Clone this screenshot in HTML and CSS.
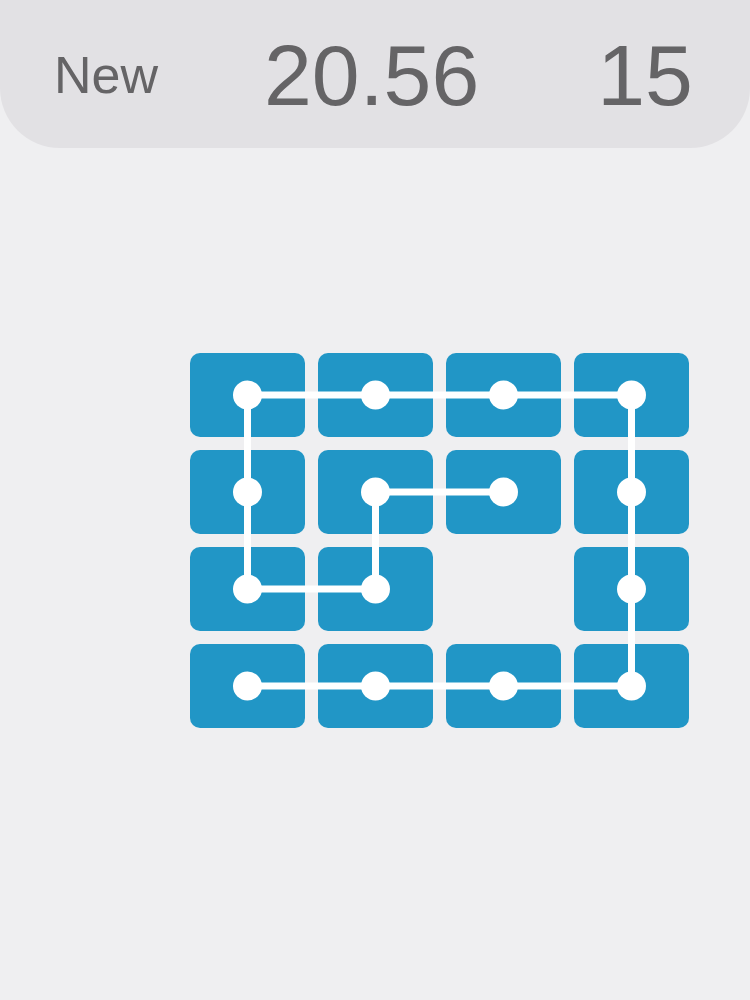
FILE: index.html
```html
<!DOCTYPE html>
<html>
<head>
<meta charset="utf-8">
<link rel="stylesheet" href="styles.css">
</head>
<body>
<header class="topbar">
  <span class="label">New</span>
  <span class="time">20.56</span>
  <span class="moves">15</span>
</header>
<main class="board-wrap">
  <div class="board">
    <div class="tile"></div><div class="tile"></div><div class="tile"></div><div class="tile"></div>
    <div class="tile"></div><div class="tile"></div><div class="tile"></div><div class="tile"></div>
    <div class="tile"></div><div class="tile"></div><div class="tile empty"></div><div class="tile"></div>
    <div class="tile"></div><div class="tile"></div><div class="tile"></div><div class="tile"></div>
    <svg class="path" width="499" height="375" viewBox="0 0 499 375">
      <polyline points="313.5,139 185.5,139 185.5,236 57.5,236 57.5,139 57.5,42 185.5,42 313.5,42 441.5,42 441.5,139 441.5,236 441.5,333 313.5,333 185.5,333 57.5,333" fill="none" stroke="#ffffff" stroke-width="7" stroke-linejoin="miter"/>
      <g fill="#ffffff">
        <circle cx="57.5" cy="42" r="14.5"/><circle cx="185.5" cy="42" r="14.5"/><circle cx="313.5" cy="42" r="14.5"/><circle cx="441.5" cy="42" r="14.5"/>
        <circle cx="57.5" cy="139" r="14.5"/><circle cx="185.5" cy="139" r="14.5"/><circle cx="313.5" cy="139" r="14.5"/><circle cx="441.5" cy="139" r="14.5"/>
        <circle cx="57.5" cy="236" r="14.5"/><circle cx="185.5" cy="236" r="14.5"/><circle cx="441.5" cy="236" r="14.5"/>
        <circle cx="57.5" cy="333" r="14.5"/><circle cx="185.5" cy="333" r="14.5"/><circle cx="313.5" cy="333" r="14.5"/><circle cx="441.5" cy="333" r="14.5"/>
      </g>
    </svg>
  </div>
</main>
</body>
</html>
```
FILE: styles.css
```css
html, body {
  margin: 0;
  padding: 0;
  background: #efeff1;
  font-family: "Liberation Sans", Arial, sans-serif;
}
body {
  width: 750px;
  height: 1000px;
  overflow: hidden;
}
.topbar {
  height: 148px;
  background: #e2e1e4;
  border-radius: 0 0 60px 60px;
  display: flex;
  align-items: flex-start;
  color: #656466;
  box-sizing: border-box;
  padding-left: 54px;
}
.topbar span {
  line-height: 1;
  display: block;
}
.label {
  font-size: 52px;
  margin-top: 49px;
}
.time {
  font-size: 86px;
  margin-top: 32px;
  margin-left: 106px;
}
.moves {
  font-size: 86px;
  margin-top: 32px;
  margin-left: 118px;
}
.board-wrap {
  padding-top: 205px;
  padding-left: 190px;
}
.board {
  position: relative;
  width: 499px;
  display: grid;
  grid-template-columns: repeat(4, 115px);
  grid-auto-rows: 84px;
  gap: 13px;
}
.tile {
  background: #2196c6;
  border-radius: 10px;
}
.tile.empty {
  background: transparent;
}
.path {
  position: absolute;
  left: 0;
  top: 0;
}
```
